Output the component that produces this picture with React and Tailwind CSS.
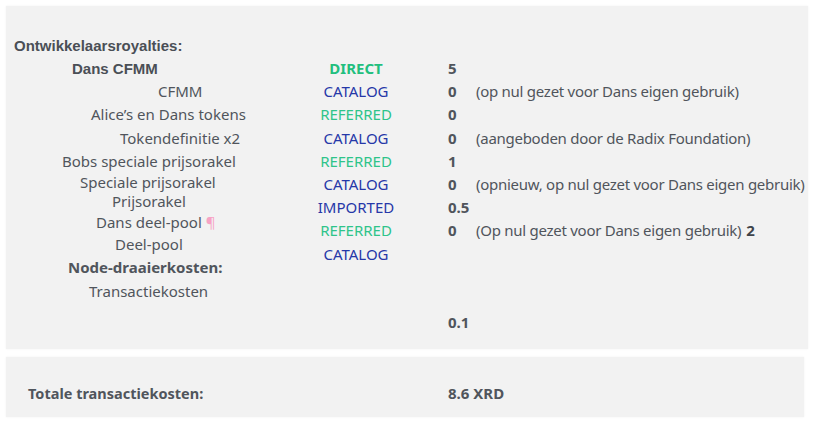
const labels = [
  { text: 'Dans CFMM', left: 66, bold: true },
  { text: 'CFMM', left: 152 },
  { text: 'Alice’s en Dans tokens', left: 85 },
  { text: 'Tokendefinitie x2', left: 114 },
  { text: 'Bobs speciale prijsorakel', left: 56 },
];

const tags = [
  { text: 'DIRECT', tone: 'direct' },
  { text: 'CATALOG', tone: 'blue' },
  { text: 'REFERRED', tone: 'green' },
  { text: 'CATALOG', tone: 'blue' },
  { text: 'REFERRED', tone: 'green' },
  { text: 'CATALOG', tone: 'blue' },
  { text: 'IMPORTED', tone: 'blue' },
  { text: 'REFERRED', tone: 'green' },
  { text: 'CATALOG', tone: 'blue' },
];

const values = [
  { n: '5' },
  { n: '0', note: '(op nul gezet voor Dans eigen gebruik)' },
  { n: '0' },
  { n: '0', note: '(aangeboden door de Radix Foundation)' },
  { n: '1' },
  { n: '0', note: '(opnieuw, op nul gezet voor Dans eigen gebruik)' },
  { n: '0.5' },
  { n: '0', note: '(Op nul gezet voor Dans eigen gebruik)', extra: '2' },
];

function Tag({ text, tone }) {
  const cls =
    tone === 'direct'
      ? 'font-bold text-[#22bf7e]'
      : tone === 'green'
      ? 'text-[#2ec48a]'
      : 'text-[#2638a8]';
  return <div className={`h-[23.2px] text-center ${cls}`}>{text}</div>;
}

export default function App() {
  return (
    <div className="min-h-screen bg-white p-[6px] font-['Noto_Sans',sans-serif] text-[15px] leading-[23px] text-[#50555c]">
      <div className="w-[802px] bg-[#f2f2f2] pt-[28px] pb-[15px] shadow-[0_0_2px_rgba(0,0,0,0.06)]">
        <div className="pl-[8px] font-['Liberation_Sans',sans-serif] font-bold text-[#4a4f56]">
          Ontwikkelaarsroyalties:
        </div>
        <div className="flex">
          <div className="w-[294px] shrink-0">
            {labels.map((l) => (
              <div
                key={l.text}
                className={l.bold ? 'h-[23.2px] font-["Liberation_Sans",sans-serif] font-bold text-[#4a4f56]' : 'h-[23.2px]'}
                style={{ paddingLeft: l.left }}
              >
                {l.text}
              </div>
            ))}
            <div className="leading-[19px]">
              <div className="pl-[74px]">Speciale prijsorakel</div>
              <div className="pl-[106px]">Prijsorakel</div>
            </div>
            <div className="h-[22px] pl-[90px]">
              Dans deel-pool <span className="text-[#f7a3c4]">¶</span>
            </div>
            <div className="h-[23px] pl-[109px]">Deel-pool</div>
            <div className="h-[24px] pl-[62px] font-bold">Node-draaierkosten:</div>
            <div className="h-[24px] pl-[83px]">Transactiekosten</div>
          </div>
          <div className="w-[112px] shrink-0">
            {tags.map((t, i) => (
              <Tag key={i} text={t.text} tone={t.tone} />
            ))}
          </div>
          <div className="pl-[36px]">
            {values.map((v, i) => (
              <div key={i} className="flex h-[23.2px] whitespace-nowrap">
                <span className="w-[28px] font-bold">{v.n}</span>
                {v.note && <span className="tracking-[-0.27px]">{v.note}</span>}
                {v.extra && <span className="ml-[5px] font-bold text-[#3f444a]">{v.extra}</span>}
              </div>
            ))}
            <div className="mt-[68px] h-[23px] font-bold">0.1</div>
          </div>
        </div>
      </div>
      <div className="mt-[8px] flex w-[798px] bg-[#f2f2f2] pt-[25px] pb-[12px] font-bold shadow-[0_0_2px_rgba(0,0,0,0.06)]">
        <div className="w-[442px] pl-[22px] text-[14.5px]">Totale transactiekosten:</div>
        <div>8.6 XRD</div>
      </div>
    </div>
  );
}
